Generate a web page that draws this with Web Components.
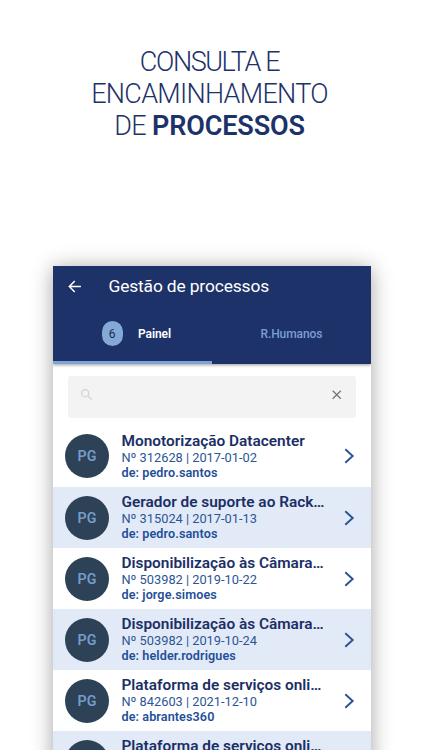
<!DOCTYPE html>
<html lang="pt">
<head>
<meta charset="utf-8">
<title>Gestão de processos</title>
<style>
    html, body { margin: 0; height: 100%; overflow: hidden; background: #fff; }
    body { font-family: Roboto, "Liberation Sans", sans-serif; }
    .l1 { letter-spacing: -1.4px; }
    .l2 { letter-spacing: -.7px; }
    .l3 { letter-spacing: -.6px; }
    .l3 b { font-weight: 600; letter-spacing: -.15px; }
</style>
</head>
<body>
<promo-page>
    <promo-title slot="title">
        <span class="l1">CONSULTA E</span>
        <span class="l2">ENCAMINHAMENTO</span>
        <span class="l3">DE <b>PROCESSOS</b></span>
    </promo-title>
    <app-header titol="Gestão de processos">
        <app-tab active count="6">Painel</app-tab>
        <app-tab>R.Humanos</app-tab>
    </app-header>
    <search-box></search-box>
    <process-list></process-list>
</promo-page>

<script>
class PromoPage extends HTMLElement {
    constructor() {
        super();
        this.attachShadow({ mode: 'open' });
        this.shadowRoot.innerHTML = `
            <style>
            :host {
                display: flex;
                flex-direction: column;
                height: 750px;
                width: 422px;
                overflow: hidden;
            }
            .top { flex: 0 0 265.5px; box-sizing: border-box; padding-top: 46px; }
            .phone {
                flex: 0 0 540px;
                width: 318.3px;
                margin-left: 52.7px;
                background: #fff;
                overflow: hidden;
                box-shadow: 0 2px 20px rgba(0, 0, 0, .36);
            }
            </style>
            <div class="top"><slot name="title"></slot></div>
            <div class="phone"><slot></slot></div>
        `;
    }
}

class PromoTitle extends HTMLElement {
    constructor() {
        super();
        this.attachShadow({ mode: 'open' });
        this.shadowRoot.innerHTML = `
            <style>
            :host {
                display: flex;
                flex-direction: column;
                align-items: center;
                padding-right: 3px;
                font: 300 27px/32px Roboto, sans-serif;
                color: #1c3268;
            }
            ::slotted(span) { white-space: nowrap; }
            </style>
            <slot></slot>
        `;
    }
}

class AppHeader extends HTMLElement {
    constructor() {
        super();
        this.attachShadow({ mode: 'open' });
        this.shadowRoot.innerHTML = `
            <style>
            :host {
                display: block;
                height: 98.5px;
                background: #1c3268;
                box-shadow: 0 1px 3px rgba(0, 0, 0, .4);
            }
            .bar { display: flex; align-items: center; height: 42px; padding-left: 13.3px; }
            svg { width: 17px; height: 17px; }
            h1 {
                margin: 0 0 1px 25.5px;
                font-size: 17.4px;
                font-weight: 400;
                line-height: 20px;
                letter-spacing: -.15px;
                color: #fff;
            }
            .tabs { display: flex; height: 56.5px; }
            </style>
            <div class="bar">
                <svg viewBox="0 0 24 24" fill="#fff"><path d="M21 10.900H7.200l5.900-5.800L11.600 3.600 3.200 12l8.400 8.400 1.500-1.500L7.200 13.100H21z"/></svg>
                <h1></h1>
            </div>
            <div class="tabs"><slot></slot></div>
        `;
    }
    connectedCallback() {
        this.shadowRoot.querySelector('h1').textContent = this.getAttribute('titol');
    }
}

class AppTab extends HTMLElement {
    constructor() {
        super();
        this.attachShadow({ mode: 'open' });
    }
    connectedCallback() {
        const count = this.getAttribute('count');
        this.shadowRoot.innerHTML = `
            <style>
            :host {
                flex: none;
                width: 50%;
                display: flex;
                align-items: center;
                justify-content: center;
                box-sizing: border-box;
                padding-bottom: 1px;
                border-bottom: 3px solid transparent;
                font-size: 12px;
                font-weight: 500;
                letter-spacing: -.1px;
                color: #7c9fd2;
            }
            :host([active]) {
                padding-left: 8px;
                border-bottom-color: #7fa5d8;
                font-weight: 600;
                color: #fff;
            }
            .count {
                width: 21px;
                height: 25px;
                margin-right: 15.5px;
                border-radius: 10.5px;
                background: #84a9d9;
                color: #1d2b45;
                font-weight: 400;
                line-height: 26px;
                text-align: center;
            }
            </style>
            ${count ? `<span class="count">${count}</span>` : ''}
            <slot></slot>
        `;
    }
}

class SearchBox extends HTMLElement {
    constructor() {
        super();
        this.attachShadow({ mode: 'open' });
        this.shadowRoot.innerHTML = `
            <style>
            :host {
                display: flex;
                justify-content: space-between;
                box-sizing: border-box;
                height: 42.5px;
                margin: 11.5px 15.3px 7.9px 15.3px;
                padding: 11.5px 11.5px 0;
                border-radius: 3px;
                background: #f3f3f3;
            }
            svg { width: 15.5px; height: 15.5px; }
            </style>
            <svg viewBox="0 0 24 24" fill="#d3d3d3"><path d="M15.5 14h-.79l-.28-.27A6.47 6.47 0 0 0 16 9.5 6.5 6.5 0 1 0 9.5 16c1.61 0 3.09-.59 4.23-1.57l.27.28v.79l5 4.99L20.49 19zm-6 0a4.5 4.5 0 1 1 0-9 4.5 4.5 0 0 1 0 9z"/></svg>
            <svg viewBox="0 0 24 24" fill="#777"><path d="M19 6.41 17.59 5 12 10.59 6.41 5 5 6.41 10.59 12 5 17.59 6.41 19 12 13.41 17.59 19 19 17.59 13.41 12z"/></svg>
        `;
    }
}

class ProcessItem extends HTMLElement {
    constructor() {
        super();
        this.attachShadow({ mode: 'open' });
    }
    set process(p) {
        this.shadowRoot.innerHTML = `
            <style>
            :host {
                display: flex;
                align-items: center;
                box-sizing: border-box;
                height: 61.1px;
                padding: 0 15px 0 12.3px;
            }
            :host(:nth-child(even)) { background: #e2eaf7; }
            .avatar {
                flex: none;
                width: 44px;
                height: 44px;
                border-radius: 50%;
                background: #2d4157;
                color: #759dcb;
                font-size: 14.2px;
                font-weight: 600;
                line-height: 44px;
                text-align: center;
            }
            .text { flex: 1; margin: 0 0 1px 12.5px; white-space: nowrap; color: #2b5596; }
            h2 { margin: 0; font-size: 15.4px; font-weight: 600; line-height: 18px; color: #1b2f66; }
            p { margin: 0; font-size: 12.8px; line-height: 15px; }
            .from { font-size: 12.6px; font-weight: 600; letter-spacing: .1px; color: #1f4f99; }
            svg { flex: none; width: 13px; height: 18px; }
            </style>
            <div class="avatar">PG</div>
            <div class="text">
                <h2>${p.title}</h2>
                <p>Nº ${p.num} | ${p.date}</p>
                <p class="from">de: ${p.from}</p>
            </div>
            <svg viewBox="0 0 13 18" fill="none" stroke="#285293" stroke-width="1.9"><path d="M2.3 2.200 9.700 9 2.300 15.800"/></svg>
        `;
    }
}

class ProcessList extends HTMLElement {
    constructor() {
        super();
        this.processes = [
            { title: 'Monotorização Datacenter', num: '312628', date: '2017-01-02', from: 'pedro.santos' },
            { title: 'Gerador de suporte ao Rack…', num: '315024', date: '2017-01-13', from: 'pedro.santos' },
            { title: 'Disponibilização às Câmara…', num: '503982', date: '2019-10-22', from: 'jorge.simoes' },
            { title: 'Disponibilização às Câmara…', num: '503982', date: '2019-10-24', from: 'helder.rodrigues' },
            { title: 'Plataforma de serviços onli…', num: '842603', date: '2021-12-10', from: 'abrantes360' },
            { title: 'Plataforma de serviços onli…', num: '842603', date: '2021-12-10', from: 'abrantes360' }
        ];
        this.attachShadow({ mode: 'open' });
        this.shadowRoot.innerHTML = `
            <style>
            :host { display: block; }
            </style>
            <div id="items"></div>
        `;
    }
    connectedCallback() {
        const items = this.shadowRoot.getElementById('items');
        items.innerHTML = '';
        this.processes.forEach(p => {
            const item = document.createElement('process-item');
            item.process = p;
            items.appendChild(item);
        });
    }
}

customElements.define('promo-page', PromoPage);
customElements.define('promo-title', PromoTitle);
customElements.define('app-header', AppHeader);
customElements.define('app-tab', AppTab);
customElements.define('search-box', SearchBox);
customElements.define('process-item', ProcessItem);
customElements.define('process-list', ProcessList);
</script>
</body>
</html>
